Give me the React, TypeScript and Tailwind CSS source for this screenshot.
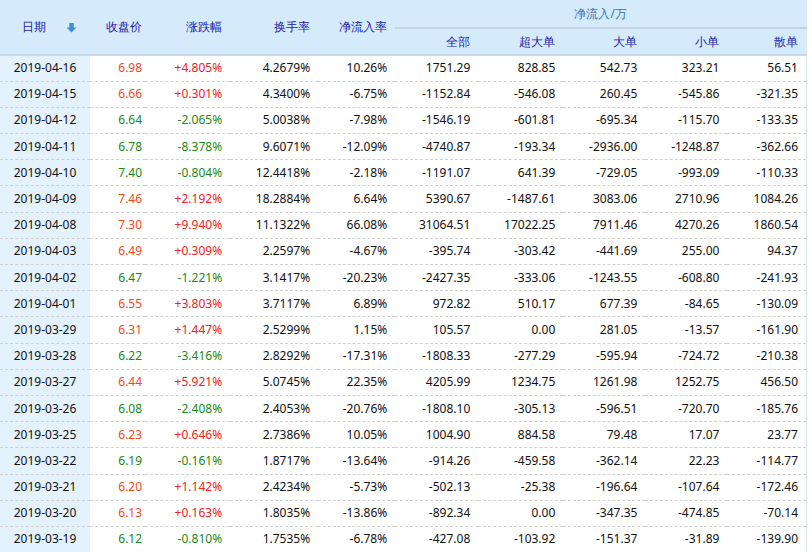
const rows: string[][] = [
  ['2019-04-16','6.98','+4.805%','4.2679%','10.26%','1751.29','828.85','542.73','323.21','56.51'],
  ['2019-04-15','6.66','+0.301%','4.3400%','-6.75%','-1152.84','-546.08','260.45','-545.86','-321.35'],
  ['2019-04-12','6.64','-2.065%','5.0038%','-7.98%','-1546.19','-601.81','-695.34','-115.70','-133.35'],
  ['2019-04-11','6.78','-8.378%','9.6071%','-12.09%','-4740.87','-193.34','-2936.00','-1248.87','-362.66'],
  ['2019-04-10','7.40','-0.804%','12.4418%','-2.18%','-1191.07','641.39','-729.05','-993.09','-110.33'],
  ['2019-04-09','7.46','+2.192%','18.2884%','6.64%','5390.67','-1487.61','3083.06','2710.96','1084.26'],
  ['2019-04-08','7.30','+9.940%','11.1322%','66.08%','31064.51','17022.25','7911.46','4270.26','1860.54'],
  ['2019-04-03','6.49','+0.309%','2.2597%','-4.67%','-395.74','-303.42','-441.69','255.00','94.37'],
  ['2019-04-02','6.47','-1.221%','3.1417%','-20.23%','-2427.35','-333.06','-1243.55','-608.80','-241.93'],
  ['2019-04-01','6.55','+3.803%','3.7117%','6.89%','972.82','510.17','677.39','-84.65','-130.09'],
  ['2019-03-29','6.31','+1.447%','2.5299%','1.15%','105.57','0.00','281.05','-13.57','-161.90'],
  ['2019-03-28','6.22','-3.416%','2.8292%','-17.31%','-1808.33','-277.29','-595.94','-724.72','-210.38'],
  ['2019-03-27','6.44','+5.921%','5.0745%','22.35%','4205.99','1234.75','1261.98','1252.75','456.50'],
  ['2019-03-26','6.08','-2.408%','2.4053%','-20.76%','-1808.10','-305.13','-596.51','-720.70','-185.76'],
  ['2019-03-25','6.23','+0.646%','2.7386%','10.05%','1004.90','884.58','79.48','17.07','23.77'],
  ['2019-03-22','6.19','-0.161%','1.8717%','-13.64%','-914.26','-459.58','-362.14','22.23','-114.77'],
  ['2019-03-21','6.20','+1.142%','2.4234%','-5.73%','-502.13','-25.38','-196.64','-107.64','-172.46'],
  ['2019-03-20','6.13','+0.163%','1.8035%','-13.86%','-892.34','0.00','-347.35','-474.85','-70.14'],
  ['2019-03-19','6.12','-0.810%','1.7535%','-6.78%','-427.08','-103.92','-151.37','-31.89','-139.90'],
];

const widths = ['w-[90px]','w-[55px]','w-[85px]','w-[88px]','w-[77px]','w-[83px]','w-[85px]','w-[82px]','w-[82px]','w-[79px]'];

export default function App() {
  return (
    <div className="w-[812px] h-[552px] overflow-hidden bg-white text-[12px] font-['Liberation_Sans','Noto_Sans_CJK_SC',sans-serif]">
      <table className="w-[807px] border-collapse table-fixed border-r border-[#dfe7ee]">
        <colgroup>
          {widths.map((w, i) => <col key={i} className={w} />)}
        </colgroup>
        <thead className="bg-[#d5ebfb] text-[#2020a8]">
          <tr className="h-[28px]">
            <th rowSpan={2} className="font-normal text-center border-b-2 border-[#c7d9e8]">
              <span className="inline-flex items-center gap-5">
                <span className="ml-[8px]">日期</span>
                <svg width="11" height="11" viewBox="0 0 10 10"><path d="M3 1h4v4h2.5L5 9.5 0.5 5H3z" fill="#3d8fd6" /></svg>
              </span>
            </th>
            <th rowSpan={2} className="font-normal text-right pr-[3px] border-b-2 border-[#c7d9e8]">收盘价</th>
            <th rowSpan={2} className="font-normal text-right pr-[8px] border-b-2 border-[#c7d9e8]">涨跌幅</th>
            <th rowSpan={2} className="font-normal text-right pr-[8px] border-b-2 border-[#c7d9e8]">换手率</th>
            <th rowSpan={2} className="font-normal text-right pr-[8px] border-b-2 border-[#c7d9e8]">净流入率</th>
            <th colSpan={5} className="font-normal text-center text-[#3a72b0] border-b-2 border-[#c4d6e6]">净流入/万</th>
          </tr>
          <tr className="h-[27px]">
            {['全部','超大单','大单','小单','散单'].map(t => (
              <th key={t} className="font-normal text-right pr-[8px] border-b-2 border-[#c7d9e8]">{t}</th>
            ))}
          </tr>
        </thead>
        <tbody>
          {rows.map(r => {
            const up = r[2].startsWith('+');
            const c = up ? 'text-[#f52020]' : 'text-[#188a18]';
            return (
              <tr key={r[0]} className="h-[26.2px] border-b border-dashed border-[#d0d0d0] text-[#111]">
                <td className="bg-[#e4f2fd] text-center">{r[0]}</td>
                <td className={`text-right pr-[3px] ${up ? 'text-[#f5481a]' : 'text-[#188a18]'}`}>{r[1]}</td>
                <td className={`text-right pr-[8px] ${c}`}>{r[2]}</td>
                {r.slice(3).map((v, i) => (
                  <td key={i} className="text-right pr-[8px]">{v}</td>
                ))}
              </tr>
            );
          })}
        </tbody>
      </table>
    </div>
  );
}
